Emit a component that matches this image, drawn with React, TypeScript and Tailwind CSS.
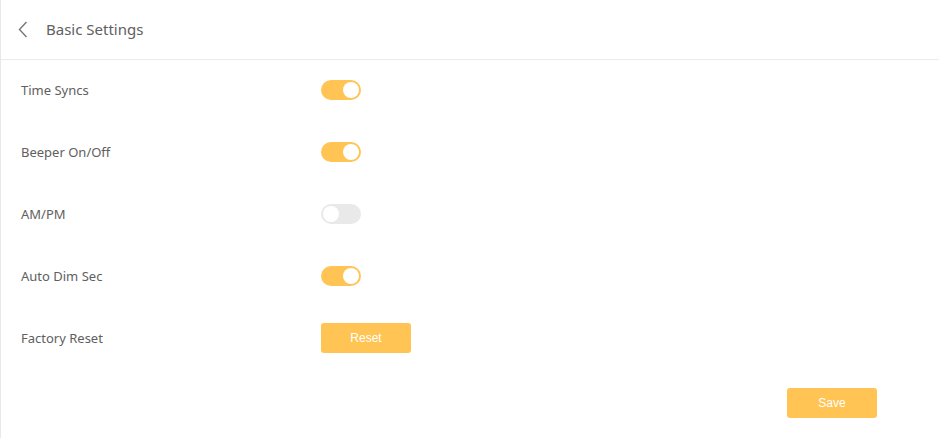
import React, { useState } from "react";

type Row =
  | { kind: "toggle"; label: string; on: boolean }
  | { kind: "button"; label: string; action: string };

const rows: Row[] = [
  { kind: "toggle", label: "Time Syncs", on: true },
  { kind: "toggle", label: "Beeper On/Off", on: true },
  { kind: "toggle", label: "AM/PM", on: false },
  { kind: "toggle", label: "Auto Dim Sec", on: true },
  { kind: "button", label: "Factory Reset", action: "Reset" },
];

function Toggle({ on, onChange }: { on: boolean; onChange: () => void }) {
  return (
    <button
      type="button"
      onClick={onChange}
      className={`relative h-5 w-10 rounded-full transition-colors ${
        on ? "bg-[#ffc454]" : "bg-[#e9e9e9]"
      }`}
    >
      <span
        className={`absolute top-[2px] h-4 w-4 rounded-full bg-white transition-all ${
          on ? "left-[22px]" : "left-[2px]"
        }`}
      />
    </button>
  );
}

export default function App() {
  const [state, setState] = useState<boolean[]>(
    rows.map((r) => (r.kind === "toggle" ? r.on : false))
  );

  return (
    <div
      className="h-[438px] w-full border-l border-[#e8e8e8] bg-white text-[#606266]"
      style={{ fontFamily: '"Noto Sans", "Open Sans", sans-serif' }}
    >
      <header className="flex h-[60px] items-center border-b border-[#ebebeb]">
        <button type="button" className="ml-[17px] flex h-4 w-[10px] items-center">
          <svg width="10" height="17" viewBox="0 0 10 17" fill="none">
            <path d="M8.5 1 L1.5 8.5 L8.5 16" stroke="#777" strokeWidth="1.4" />
          </svg>
        </button>
        <h1 className="ml-[18px] text-[15px] text-[#606060]">Basic Settings</h1>
      </header>

      <div className="-mt-px">
        {rows.map((row, i) => (
          <div key={row.label} className="flex h-[62px] items-center">
            <span className="w-[320px] pl-[20px] pt-[2px] text-[13px] text-[#606060]">
              {row.label}
            </span>
            {row.kind === "toggle" ? (
              <Toggle
                on={state[i]}
                onChange={() =>
                  setState((s) => s.map((v, j) => (j === i ? !v : v)))
                }
              />
            ) : (
              <button
                type="button"
                className="h-[30px] w-[90px] rounded-[3px] bg-[#ffc454] text-[12px] text-white"
                style={{ fontFamily: '"Liberation Sans", Arial, sans-serif' }}
              >
                {row.action}
              </button>
            )}
          </div>
        ))}
      </div>

      <div className="mt-[19px] flex justify-end pr-[62px]">
        <button
          type="button"
          className="h-[30px] w-[90px] rounded-[3px] bg-[#ffc454] text-[12px] text-white"
          style={{ fontFamily: '"Liberation Sans", Arial, sans-serif' }}
        >
          Save
        </button>
      </div>
    </div>
  );
}
